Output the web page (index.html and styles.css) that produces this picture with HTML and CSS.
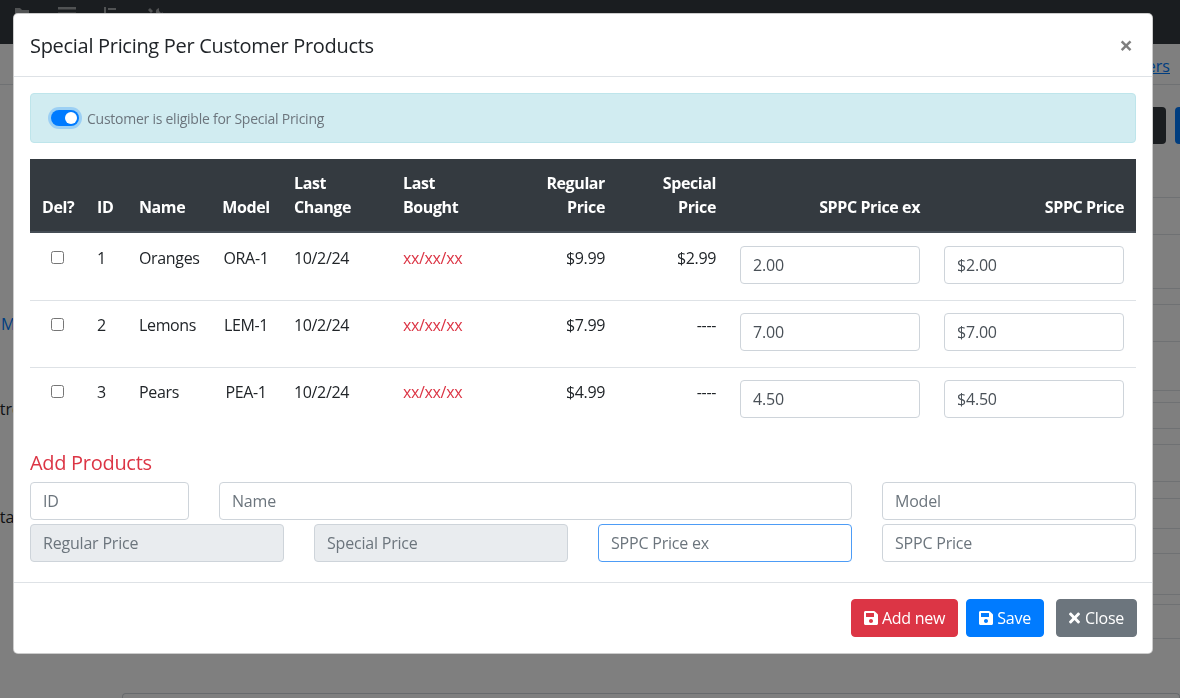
FILE: index.html
```html
<!DOCTYPE html>
<html lang="en">
<head>
<meta charset="utf-8">
<title>Special Pricing Per Customer Products</title>
<link rel="stylesheet" href="styles.css">
</head>
<body>
<div class="page">
  <nav class="navbar">
    <span class="nav-icon">
      <svg width="16" height="14" viewBox="0 0 16 14"><path d="M1 1h5l2 2h7v10H1z" fill="#fff"/></svg>
    </span>
    <span class="caret"></span>
    <span class="nav-icon nav-gap">
      <svg width="18" height="14" viewBox="0 0 18 14"><rect x="0" y="0" width="18" height="2.5" fill="#fff"/><rect x="0" y="5.5" width="18" height="2.5" fill="#fff"/><rect x="0" y="11" width="18" height="2.5" fill="#fff"/></svg>
    </span>
    <span class="caret"></span>
    <span class="nav-icon nav-gap">
      <svg width="16" height="14" viewBox="0 0 16 14"><rect x="0" y="0" width="2" height="14" fill="#fff"/><rect x="4" y="1" width="8" height="2" fill="#fff"/><rect x="4" y="6" width="12" height="2" fill="#fff"/><rect x="4" y="11" width="6" height="2" fill="#fff"/></svg>
    </span>
    <span class="caret"></span>
    <span class="nav-icon nav-gap">
      <svg width="16" height="16" viewBox="0 0 16 16"><path d="M2 1l3 3-1 1 6 6 1-1 4 4-2 2-4-4 1-1-6-6-1 1-3-3z" fill="#fff"/><path d="M11 1a4 4 0 0 0-3 5l-6 6 2 2 6-6a4 4 0 0 0 5-3l-2 1-2-2z" fill="#fff"/></svg>
    </span>
    <span class="caret"></span>
  </nav>
  <div class="tabs-row">
    <a class="tab-link" href="#">Customers</a>
  </div>
  <div class="page-body">
    <div class="side-labels">
      <div class="side-label side-m"><span class="link-text">Map</span></div>
      <div class="side-label side-tre"><span class="cut-s">Street</span></div>
      <div class="side-label side-tat"><span class="cut-s">State</span></div>
    </div>
    <div class="page-main">
      <div class="toolbar">
        <span class="tb-btn tb-dark"></span>
        <span class="tb-btn tb-blue"></span>
      </div>
      <div class="bg-row r37"></div>
      <div class="bg-row r54"></div>
      <div class="bg-row r16"></div>
      <div class="bg-row r37"></div>
      <div class="bg-row r49"></div>
      <div class="bg-row r12"></div>
      <div class="bg-row r26"></div>
      <div class="bg-row r16"></div>
      <div class="bg-row r37"></div>
      <div class="bg-row r17"></div>
      <div class="bg-row r30"></div>
      <div class="bg-row r25"></div>
      <div class="bg-row r41"></div>
      <div class="bg-row r10"></div>
      <div class="bg-row r34"></div>
      <div class="bg-card"></div>
    </div>
  </div>
</div>

<div class="backdrop"></div>

<div class="modal">
  <div class="modal-header">
    <h5 class="modal-title">Special Pricing Per Customer Products</h5>
    <button class="close" type="button">&times;</button>
  </div>
  <div class="modal-body">
    <div class="alert">
      <label class="switch">
        <span class="switch-track"><span class="switch-knob"></span></span>
        <span class="switch-label">Customer is eligible for Special Pricing</span>
      </label>
    </div>

    <table class="ptable">
      <colgroup>
        <col class="c-del"><col class="c-id"><col class="c-name"><col class="c-model"><col class="c-change"><col class="c-bought"><col class="c-reg"><col class="c-spec"><col class="c-sppcex"><col class="c-sppc">
      </colgroup>
      <thead>
        <tr>
          <th>Del?</th>
          <th>ID</th>
          <th>Name</th>
          <th class="center">Model</th>
          <th>Last<br>Change</th>
          <th>Last<br>Bought</th>
          <th class="right">Regular<br>Price</th>
          <th class="right">Special<br>Price</th>
          <th class="right">SPPC Price ex</th>
          <th class="right">SPPC Price</th>
        </tr>
      </thead>
      <tbody>
        <tr>
          <td class="center"><input type="checkbox" class="chk"></td>
          <td>1</td>
          <td>Oranges</td>
          <td class="center">ORA-1</td>
          <td>10/2/24</td>
          <td class="red">xx/xx/xx</td>
          <td class="right">$9.99</td>
          <td class="right">$2.99</td>
          <td><input class="form-control" type="text" value="2.00"></td>
          <td><input class="form-control" type="text" value="$2.00"></td>
        </tr>
        <tr>
          <td class="center"><input type="checkbox" class="chk"></td>
          <td>2</td>
          <td>Lemons</td>
          <td class="center">LEM-1</td>
          <td>10/2/24</td>
          <td class="red">xx/xx/xx</td>
          <td class="right">$7.99</td>
          <td class="right">----</td>
          <td><input class="form-control" type="text" value="7.00"></td>
          <td><input class="form-control" type="text" value="$7.00"></td>
        </tr>
        <tr>
          <td class="center"><input type="checkbox" class="chk"></td>
          <td>3</td>
          <td>Pears</td>
          <td class="center">PEA-1</td>
          <td>10/2/24</td>
          <td class="red">xx/xx/xx</td>
          <td class="right">$4.99</td>
          <td class="right">----</td>
          <td><input class="form-control" type="text" value="4.50"></td>
          <td><input class="form-control" type="text" value="$4.50"></td>
        </tr>
      </tbody>
    </table>

    <h5 class="add-title">Add Products</h5>
    <div class="add-row add-row-1">
      <input class="form-control" type="text" placeholder="ID">
      <input class="form-control" type="text" placeholder="Name">
      <input class="form-control" type="text" placeholder="Model">
    </div>
    <div class="add-row add-row-2">
      <input class="form-control" type="text" placeholder="Regular Price" disabled>
      <input class="form-control" type="text" placeholder="Special Price" disabled>
      <input class="form-control focused" type="text" placeholder="SPPC Price ex">
      <input class="form-control" type="text" placeholder="SPPC Price">
    </div>
  </div>
  <div class="modal-footer">
    <button class="btn btn-danger" type="button">
      <svg class="ico" viewBox="0 0 448 512"><path fill="currentColor" d="M433.941 129.941l-83.882-83.882A48 48 0 0 0 316.118 32H48C21.49 32 0 53.49 0 80v352c0 26.51 21.49 48 48 48h352c26.51 0 48-21.49 48-48V163.882a48 48 0 0 0-14.059-33.941zM224 416c-35.346 0-64-28.654-64-64 0-35.346 28.654-64 64-64s64 28.654 64 64c0 35.346-28.654 64-64 64zm96-304.52V212c0 6.627-5.373 12-12 12H76c-6.627 0-12-5.373-12-12V108c0-6.627 5.373-12 12-12h228.52c3.183 0 6.235 1.264 8.485 3.515l3.48 3.48A11.996 11.996 0 0 1 320 111.48z"/></svg>
      Add new
    </button>
    <button class="btn btn-primary" type="button">
      <svg class="ico" viewBox="0 0 448 512"><path fill="currentColor" d="M433.941 129.941l-83.882-83.882A48 48 0 0 0 316.118 32H48C21.49 32 0 53.49 0 80v352c0 26.51 21.49 48 48 48h352c26.51 0 48-21.49 48-48V163.882a48 48 0 0 0-14.059-33.941zM224 416c-35.346 0-64-28.654-64-64 0-35.346 28.654-64 64-64s64 28.654 64 64c0 35.346-28.654 64-64 64zm96-304.52V212c0 6.627-5.373 12-12 12H76c-6.627 0-12-5.373-12-12V108c0-6.627 5.373-12 12-12h228.52c3.183 0 6.235 1.264 8.485 3.515l3.48 3.48A11.996 11.996 0 0 1 320 111.48z"/></svg>
      Save
    </button>
    <button class="btn btn-secondary btn-close" type="button">
      <svg class="ico ico-x" viewBox="0 0 352 512"><path fill="currentColor" d="M242.72 256l100.07-100.07c12.28-12.28 12.28-32.19 0-44.48l-22.24-22.24c-12.28-12.28-32.19-12.28-44.48 0L176 189.28 75.93 89.21c-12.28-12.28-32.19-12.28-44.48 0L9.21 111.45c-12.28 12.28-12.28 32.19 0 44.48L109.28 256 9.21 356.07c-12.28 12.28-12.28 32.19 0 44.48l22.24 22.24c12.28 12.28 32.2 12.28 44.48 0L176 322.72l100.07 100.07c12.28 12.28 32.2 12.28 44.48 0l22.24-22.24c12.28-12.28 12.28-32.19 0-44.48L242.72 256z"/></svg>
      Close
    </button>
  </div>
</div>
</body>
</html>
```

FILE: styles.css
```css
* { box-sizing: border-box; }

html, body {
  margin: 0;
  padding: 0;
  width: 1180px;
  height: 698px;
  overflow: hidden;
}

body {
  font-family: "Open Sans", "Noto Sans", "Liberation Sans", sans-serif;
  font-size: 16px;
  line-height: 1.5;
  color: #212529;
  background: #fff;
}

/* ---------- background page ---------- */
.page { width: 1180px; height: 698px; overflow: hidden; }

.navbar {
  height: 44px;
  background: #343a40;
  display: flex;
  align-items: flex-start;
  padding: 7px 0 0 14px;
}
.nav-icon { display: inline-flex; opacity: .55; }
.nav-gap { margin-left: 14px; }
.caret {
  width: 0; height: 0;
  margin: 6px 0 0 6px;
  border-left: 4px solid transparent;
  border-right: 4px solid transparent;
  border-top: 4px solid rgba(255,255,255,.55);
}

.tabs-row {
  height: 41px;
  border-bottom: 1px solid #dee2e6;
  display: flex;
  justify-content: flex-end;
  align-items: center;
  padding-right: 10px;
}
.tab-link {
  color: #007bff;
  text-decoration: underline;
  font-size: 16px;
  line-height: 20px;
  margin-top: 4px;
}

.page-body {
  display: grid;
  grid-template-columns: 80px 1fr;
}
.side-labels { display: flex; flex-direction: column; }
.side-label {
  white-space: nowrap;
  line-height: 24px;
  height: 24px;
}
.side-m { margin-top: 227px; padding-left: 1px; }
.side-tre { margin-top: 61px; }
.side-tat { margin-top: 84px; }
.link-text { color: #007bff; }
.cut-s { margin-left: -9px; }

.toolbar {
  height: 113px;
  border-bottom: 1px solid #dee2e6;
  display: flex;
  justify-content: flex-end;
  align-items: flex-start;
  padding-top: 22px;
  margin-right: -41px;
}
.tb-btn { height: 37px; border-radius: 4px; display: inline-block; flex: none; }
.tb-dark { width: 46px; background: #343a40; }
.tb-blue { width: 46px; background: #007bff; margin-left: 9px; }

.bg-row { border-bottom: 1px solid #dee2e6; }
.r10 { height: 10px; }
.r12 { height: 12px; }
.r16 { height: 16px; }
.r17 { height: 17px; }
.r25 { height: 25px; }
.r26 { height: 26px; }
.r30 { height: 30px; }
.r34 { height: 34px; }
.r37 { height: 37px; }
.r41 { height: 41px; }
.r49 { height: 49px; }
.r54 { height: 54px; }
.bg-card {
  margin: 54px 0 0 42px;
  height: 6px;
  border: 1px solid #ced4da;
  border-bottom: 0;
  border-radius: 4px 4px 0 0;
}

.backdrop {
  position: fixed;
  inset: 0;
  background: rgba(0,0,0,.5);
}

/* ---------- modal ---------- */
.modal {
  position: fixed;
  left: 13px;
  top: 13px;
  width: 1140px;
  background: #fff;
  border: 1px solid rgba(0,0,0,.2);
  border-radius: 5px;
  display: flex;
  flex-direction: column;
}

.modal-header {
  display: flex;
  align-items: flex-start;
  justify-content: space-between;
  padding: 16px;
  border-bottom: 1px solid #dee2e6;
}
.modal-title {
  margin: 0;
  font-size: 20px;
  font-weight: 500;
  line-height: 30px;
  letter-spacing: -0.3px;
  position: relative;
  top: 1px;
}
.close {
  background: transparent;
  border: 0;
  padding: 0 3px 0 0;
  margin: 0;
  font-family: inherit;
  font-size: 24px;
  font-weight: 700;
  line-height: 30px;
  color: #000;
  opacity: .5;
}

.modal-body { padding: 16px 16px 20px; }

.alert {
  background: #d1ecf1;
  border: 1px solid #bee5eb;
  border-radius: 4px;
  padding: 12px 20px;
  margin-bottom: 16px;
  height: 50px;
}
.switch {
  display: flex;
  align-items: center;
  height: 24px;
}
.switch-track {
  width: 28px;
  height: 16px;
  border-radius: 8px;
  background: #007bff;
  box-shadow: 0 0 0 3px rgba(0,123,255,.25);
  display: flex;
  align-items: center;
  justify-content: flex-end;
  padding-right: 2px;
  margin-right: 8px;
}
.switch-knob {
  width: 12px;
  height: 12px;
  border-radius: 50%;
  background: #fff;
}
.switch-label {
  font-size: 14px;
  color: #6c757d;
  letter-spacing: -0.25px;
}

/* ---------- table ---------- */
.ptable {
  width: 1106px;
  border-collapse: collapse;
  table-layout: fixed;
}
.c-del { width: 55px; }
.c-id { width: 42px; }
.c-name { width: 83px; }
.c-model { width: 72px; }
.c-change { width: 109px; }
.c-bought { width: 114px; }
.c-reg { width: 112px; }
.c-spec { width: 111px; }
.c-sppcex { width: 204px; }
.c-sppc { width: 204px; }

.ptable th {
  background: #343a40;
  color: #fff;
  font-weight: 700;
  text-align: left;
  vertical-align: bottom;
  padding: 12px;
  line-height: 24px;
  border-bottom: 2px solid #454d55;
  white-space: nowrap;
  letter-spacing: -0.4px;
}
.ptable td {
  padding: 12px 12px 16px;
  vertical-align: top;
  border-top: 1px solid #dee2e6;
  line-height: 24px;
  white-space: nowrap;
  letter-spacing: -0.35px;
}
.ptable tbody tr:first-child td { border-top: 0; padding-top: 13px; }
.ptable .center { text-align: center; }
.ptable .right { text-align: right; }
.ptable .red { color: #dc3545; }

.chk {
  width: 13px;
  height: 13px;
  margin: 5px 0 0;
}

/* ---------- form controls ---------- */
.form-control {
  display: block;
  width: 100%;
  height: 38px;
  padding: 6px 12px;
  font-family: inherit;
  font-size: 16px;
  line-height: 24px;
  color: #495057;
  background: #fff;
  border: 1px solid #ced4da;
  border-radius: 4px;
  letter-spacing: -0.2px;
}
.form-control::placeholder { color: #6c757d; opacity: 1; }
.form-control:disabled { background: #e9ecef; }
.form-control.focused { border-color: #4d9cf6; }

.add-title {
  margin: 17px 0 7px;
  font-size: 20px;
  font-weight: 500;
  line-height: 24px;
  color: #dc3545;
  letter-spacing: -0.3px;
}
.add-row { display: grid; column-gap: 30px; }
.add-row-1 { grid-template-columns: 159px 1fr 254px; margin-bottom: 4px; }
.add-row-2 { grid-template-columns: repeat(4, 1fr); }

/* ---------- footer ---------- */
.modal-footer {
  display: flex;
  justify-content: flex-end;
  align-items: center;
  padding: 16px 15px 16px;
  border-top: 1px solid #dee2e6;
}
.btn {
  display: inline-flex;
  align-items: center;
  height: 38px;
  padding: 6px 12px;
  font-family: inherit;
  font-size: 16px;
  line-height: 24px;
  color: #fff;
  border: 1px solid transparent;
  border-radius: 4px;
  letter-spacing: -0.25px;
}
.btn + .btn { margin-left: 8px; }
.btn-close { margin-left: 12px !important; }
.btn-danger { background: #dc3545; border-color: #dc3545; }
.btn-primary { background: #007bff; border-color: #007bff; }
.btn-secondary { background: #6c757d; border-color: #6c757d; }
.ico { width: 14px; height: 16px; margin-right: 4px; }
.ico-x { width: 11px; margin-right: 5px; }
```
